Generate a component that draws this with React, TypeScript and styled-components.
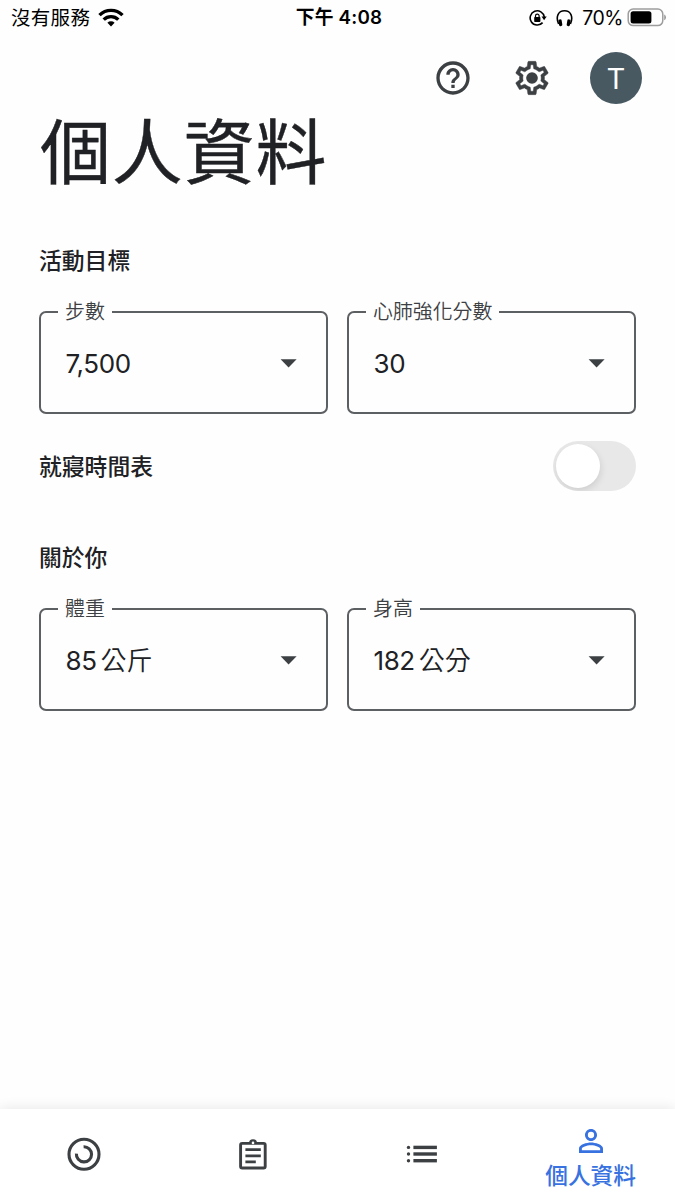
import React from "react";
import styled, { createGlobalStyle } from "styled-components";
import { MdHelpOutline, MdPersonOutline } from "react-icons/md";

const INK = "#202124";
const ICON = "#3c4043";
const BLUE = "#3871e0";

const GlobalStyle = createGlobalStyle`
  * { box-sizing: border-box; }
  body {
    margin: 0;
    background: #fefefe;
    color: ${INK};
    font-family: Inter, "Noto Sans CJK TC", sans-serif;
  }
  svg { display: block; flex: none; }
`;

const Screen = styled.div`
  height: 1200px;
  display: flex;
  flex-direction: column;
  overflow: hidden;
`;

const StatusBar = styled.header`
  height: 34px;
  display: grid;
  grid-template-columns: 1fr auto 1fr;
  align-items: center;
  padding: 0 8px 0 11px;
  color: #000;
  font-size: 19.5px;
  line-height: 34px;
`;

const StatusGroup = styled.div<{ $end?: boolean }>`
  display: flex;
  align-items: center;
  justify-content: ${(p) => (p.$end ? "flex-end" : "flex-start")};
`;

const Carrier = styled.span`
  width: 86.5px;
  padding-top: 1px;
  letter-spacing: 0.3px;
  white-space: nowrap;
`;

const Clock = styled.span`
  padding-top: 1px;
  font-size: 18.8px;
  font-weight: 600;
  letter-spacing: 0.2px;
`;

const StatusIcons = styled.div`
  display: flex;
  align-items: center;
  gap: 9px;
  margin-right: 9px;
`;

const Percent = styled.span`
  margin-right: 4px;
  padding-top: 1px;
  font-size: 19.5px;
  letter-spacing: -0.5px;
`;

const Actions = styled.div`
  height: 70px;
  padding: 18px 33px 0 0;
  display: flex;
  justify-content: flex-end;
  align-items: center;
`;

const IconButton = styled.button`
  border: 0;
  padding: 0;
  margin-right: 38.5px;
  background: none;
  color: ${ICON};
`;

const Avatar = styled.div`
  width: 52px;
  height: 52px;
  border-radius: 50%;
  background: #485962;
  color: #fff;
  font: 29px/54px Roboto, sans-serif;
  text-align: center;
`;

const Content = styled.main`
  flex: 1;
  padding: 0 39px;
`;

const Title = styled.h1`
  margin: 12px 0 0 1px;
  height: 72px;
  font-size: 71px;
  line-height: 72px;
  font-weight: 400;
  letter-spacing: 0.8px;
  -webkit-text-stroke: 0.4px ${INK};
`;

const SectionTitle = styled.h2`
  margin: 0;
  padding-top: 1px;
  font-size: 22.8px;
  line-height: 32px;
  font-weight: 500;
`;

const Section = styled.section<{ $top: number }>`
  margin-top: ${(p) => p.$top}px;
`;

const Fields = styled.div`
  margin-top: 34px;
  display: grid;
  grid-template-columns: 1fr 1fr;
  gap: 19px;
`;

const Field = styled.div`
  position: relative;
  height: 103px;
  border: 2px solid #5d6063;
  border-radius: 7px;
  padding: 2px 28px 0 24.5px;
  display: flex;
  align-items: center;
  justify-content: space-between;
`;

const FieldLabel = styled.label`
  position: absolute;
  top: -16px;
  left: 17px;
  padding: 0 7px;
  background: #fefefe;
  color: ${ICON};
  font-size: 19.9px;
  line-height: 31px;
  font-weight: 350;
`;

const FieldValue = styled.span`
  font-size: 26px;
  line-height: 36px;
  letter-spacing: -0.4px;
  white-space: nowrap;
`;

const Unit = styled.span`
  margin-left: 4px;
  font-weight: 350;
  letter-spacing: 0;
`;

const SwitchRow = styled.div`
  height: 50px;
  margin-top: 27px;
  display: flex;
  align-items: center;
  justify-content: space-between;
`;

const Switch = styled.div`
  width: 83px;
  height: 50px;
  padding: 3px;
  border-radius: 25px;
  background: #e8e8e8;
  overflow: hidden;
`;

const Knob = styled.div`
  width: 44px;
  height: 44px;
  border-radius: 50%;
  background: #fff;
  box-shadow: 1px 3px 7px rgba(0, 0, 0, 0.11);
`;

const NavBar = styled.nav`
  height: 91px;
  display: grid;
  grid-template-columns: repeat(4, 1fr);
  background: #fff;
  box-shadow: 0 -1px 12px rgba(0, 0, 0, 0.09);
`;

const NavItem = styled.div<{ $active?: boolean }>`
  display: flex;
  flex-direction: column;
  align-items: center;
  padding-top: ${(p) => (p.$active ? 14 : 26)}px;
  color: ${(p) => (p.$active ? BLUE : ICON)};
`;

const NavLabel = styled.span`
  padding-top: 1px;
  font-size: 22.7px;
  line-height: 32px;
  font-weight: 500;
`;

const Wifi = () => (
  <svg width="26" height="19" viewBox="0 0 26 19" fill="none" stroke="#000" strokeWidth="3.4">
    <path d="M1.5 7.1a16.3 16.3 0 0 1 23 0" />
    <path d="M5.7 11.6a10.4 10.4 0 0 1 14.6 0" />
    <path d="M13 18.5l-3.6-3.7a5.1 5.1 0 0 1 7.2 0z" fill="#000" stroke="none" />
  </svg>
);

const RotationLock = () => (
  <svg width="18" height="18" viewBox="0 0 18 18" fill="none" stroke="#000" strokeWidth="1.6">
    <path d="M13.6 13.6A7.1 7.1 0 1 1 15.3 8" />
    <path d="M12.5 7.4h5.2l-2.6 3.9z" fill="#000" stroke="none" />
    <rect x="5.2" y="8" width="6.2" height="5" rx="0.7" fill="#000" stroke="none" />
    <path d="M6.5 8.4V6.9a1.8 1.8 0 0 1 3.6 0v1.5" strokeWidth="1.2" />
  </svg>
);

const Headphones = () => (
  <svg width="17" height="18" viewBox="0 0 17 18" fill="none" stroke="#000" strokeWidth="1.6">
    <path d="M2.6 15C-.6 7.5 2.3 1.8 8.5 1.8S17.6 7.5 14.4 15" />
    <rect x="2.7" y="10.4" width="3.3" height="6.8" rx="1.3" transform="rotate(-9 4.3 13.8)" fill="#000" stroke="none" />
    <rect x="11" y="10.4" width="3.3" height="6.8" rx="1.3" transform="rotate(9 12.7 13.8)" fill="#000" stroke="none" />
  </svg>
);

const Battery = () => (
  <svg width="40" height="19" viewBox="0 0 40 19">
    <rect x="1.2" y="1" width="34.6" height="16.6" rx="5" fill="none" stroke="#9d9d9d" strokeWidth="1.5" />
    <rect x="3.6" y="3.2" width="20.8" height="12.2" rx="2.5" fill="#000" />
    <path d="M37.2 6.4c2.4 1 2.4 4.8 0 5.8z" fill="#9d9d9d" />
  </svg>
);

const Gear = () => (
  <svg width="40" height="40" viewBox="0 0 24 24" fill="currentColor">
    <path stroke="currentColor" strokeWidth="0.25" d="M19.43 12.98c.04-.32.07-.64.07-.98 0-.34-.03-.66-.07-.98l2.11-1.65c.19-.15.24-.42.12-.64l-2-3.46c-.09-.16-.26-.25-.44-.25-.06 0-.12.01-.17.03l-2.49 1c-.52-.4-1.08-.73-1.69-.98l-.38-2.65C14.46 2.18 14.25 2 14 2h-4c-.25 0-.46.18-.49.42l-.38 2.65c-.61.25-1.17.59-1.69.98l-2.49-1c-.06-.02-.12-.03-.18-.03-.17 0-.34.09-.43.25l-2 3.46c-.13.22-.07.49.12.64l2.11 1.65c-.04.32-.07.65-.07.98 0 .33.03.66.07.98l-2.11 1.65c-.19.15-.24.42-.12.64l2 3.46c.09.16.26.25.44.25.06 0 .12-.01.17-.03l2.49-1c.52.4 1.08.73 1.69.98l.38 2.65c.03.24.24.42.49.42h4c.25 0 .46-.18.49-.42l.38-2.65c.61-.25 1.17-.59 1.69-.98l2.49 1c.06.02.12.03.18.03.17 0 .34-.09.43-.25l2-3.46c.12-.22.07-.49-.12-.64l-2.11-1.65zm-1.98-1.71c.04.31.05.52.05.73 0 .21-.02.43-.05.73l-.14 1.13.89.7 1.08.84-.7 1.21-1.27-.51-1.04-.42-.9.68c-.43.32-.84.56-1.25.73l-1.06.43-.16 1.13-.2 1.35h-1.4l-.19-1.35-.16-1.13-1.06-.43c-.43-.18-.83-.41-1.23-.71l-.91-.7-1.06.43-1.27.51-.7-1.21 1.08-.84.89-.7-.14-1.13c-.03-.31-.05-.54-.05-.74s.02-.43.05-.73l.14-1.13-.89-.7-1.08-.84.7-1.21 1.27.51 1.04.42.9-.68c.43-.32.84-.56 1.25-.73l1.06-.43.16-1.13.2-1.35h1.39l.19 1.35.16 1.13 1.06.43c.43.18.83.41 1.23.71l.91.7 1.06-.43 1.27-.51.7 1.21-1.07.85-.89.7.14 1.13z" />
    <circle cx="12" cy="12" r="3.5" />
  </svg>
);

const Caret = () => (
  <svg width="18" height="9" viewBox="0 0 18 9">
    <path d="M.6 .3h16L8.6 8.4z" fill={ICON} />
  </svg>
);

const Rings = () => (
  <svg width="38" height="38" viewBox="0 0 38 38" fill="none" stroke="currentColor" strokeWidth="3.1">
    <circle cx="19" cy="19.2" r="15" />
    <path d="M18.6 11.7A7.6 7.6 0 1 1 11.4 18.6" />
  </svg>
);

const Clipboard = () => (
  <svg width="38" height="38" viewBox="0 0 38 38" fill="none" stroke="currentColor">
    <rect x="6.6" y="8.4" width="24.6" height="24.6" rx="1.6" strokeWidth="2.9" />
    <path d="M15 8.2a4 4 0 0 1 8 0z" fill="currentColor" stroke="none" />
    <circle cx="19" cy="7.9" r="1.3" fill="#fff" stroke="none" />
    <path d="M11.4 14.6h15.4M11.4 20.8h15.4M11.4 26.8h10.4" strokeWidth="2.8" />
  </svg>
);

const List = () => (
  <svg width="38" height="38" viewBox="0 0 38 38" fill="currentColor">
    {[12.4, 19, 25.7].map((y) => (
      <g key={y}>
        <circle cx="5.5" cy={y} r="1.7" />
        <rect x="10.4" y={y - 1.7} width="23.5" height="3.4" />
      </g>
    ))}
  </svg>
);

interface SelectProps {
  label: string;
  value: string;
  unit?: string;
}

const SelectField = ({ label, value, unit }: SelectProps) => (
  <Field>
    <FieldLabel>{label}</FieldLabel>
    <FieldValue>
      {value}
      {unit && <Unit>{unit}</Unit>}
    </FieldValue>
    <Caret />
  </Field>
);

export default function App() {
  return (
    <Screen>
      <GlobalStyle />
      <StatusBar>
        <StatusGroup>
          <Carrier>沒有服務</Carrier>
          <Wifi />
        </StatusGroup>
        <Clock>下午 4:08</Clock>
        <StatusGroup $end>
          <StatusIcons>
            <RotationLock />
            <Headphones />
          </StatusIcons>
          <Percent>70%</Percent>
          <Battery />
        </StatusGroup>
      </StatusBar>
      <Actions>
        <IconButton aria-label="說明">
          <MdHelpOutline size={40} />
        </IconButton>
        <IconButton aria-label="設定">
          <Gear />
        </IconButton>
        <Avatar>T</Avatar>
      </Actions>
      <Content>
        <Title>個人資料</Title>
        <Section $top={56}>
          <SectionTitle>活動目標</SectionTitle>
          <Fields>
            <SelectField label="步數" value="7,500" />
            <SelectField label="心肺強化分數" value="30" />
          </Fields>
        </Section>
        <SwitchRow>
          <SectionTitle>就寢時間表</SectionTitle>
          <Switch role="switch" aria-checked={false}>
            <Knob />
          </Switch>
        </SwitchRow>
        <Section $top={50}>
          <SectionTitle>關於你</SectionTitle>
          <Fields>
            <SelectField label="體重" value="85" unit="公斤" />
            <SelectField label="身高" value="182" unit="公分" />
          </Fields>
        </Section>
      </Content>
      <NavBar>
        <NavItem>
          <Rings />
        </NavItem>
        <NavItem>
          <Clipboard />
        </NavItem>
        <NavItem>
          <List />
        </NavItem>
        <NavItem $active>
          <MdPersonOutline size={36} />
          <NavLabel>個人資料</NavLabel>
        </NavItem>
      </NavBar>
    </Screen>
  );
}
